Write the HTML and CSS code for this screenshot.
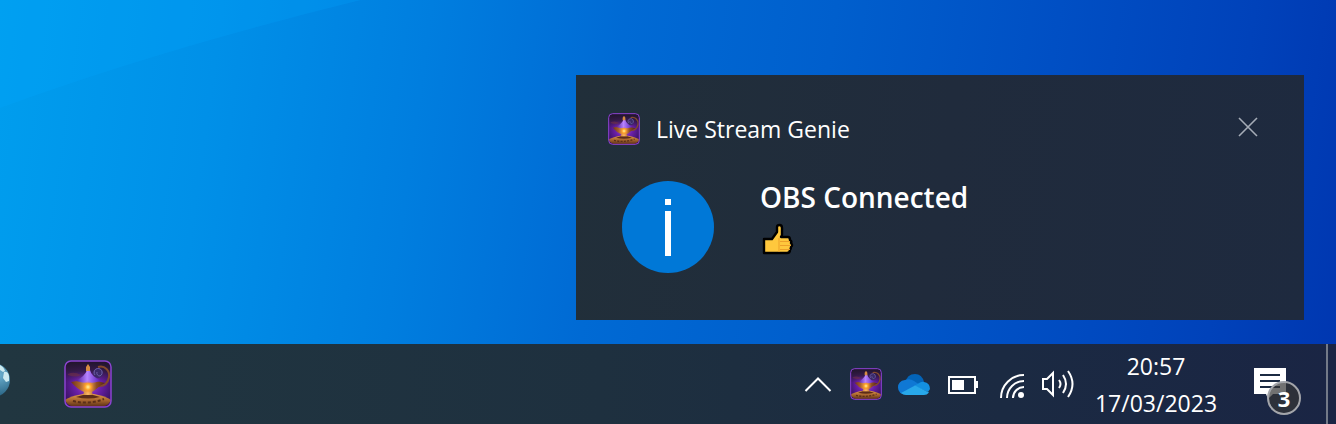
FILE: index.html
```html
<!DOCTYPE html>
<html lang="en">
<head>
<meta charset="utf-8">
<title>Desktop</title>
<link rel="stylesheet" href="styles.css">
</head>
<body class="desktop">
<svg class="sprite" aria-hidden="true">
  <defs>
    <radialGradient id="glow" cx="50%" cy="50%" r="55%">
      <stop offset="0" stop-color="#b050e0"/><stop offset=".5" stop-color="#6a1fa8"/><stop offset="1" stop-color="#3a1264"/>
    </radialGradient>
    <linearGradient id="shade" x1="0" x2="0" y1="0" y2="1">
      <stop offset="0" stop-color="#1e1428"/><stop offset=".5" stop-color="#2e1a3c" stop-opacity=".85"/><stop offset="1" stop-color="#3a1a54" stop-opacity="0"/>
    </linearGradient>
    <linearGradient id="gold" x1="0" x2="1" y1="0" y2="0">
      <stop offset="0" stop-color="#6e3216"/><stop offset=".25" stop-color="#a8602a"/><stop offset=".5" stop-color="#ffb860"/><stop offset=".75" stop-color="#8e4c22"/><stop offset="1" stop-color="#542612"/>
    </linearGradient>
    <linearGradient id="base" x1="0" x2="0" y1="0" y2="1">
      <stop offset="0" stop-color="#e09a48"/><stop offset=".45" stop-color="#a8652e"/><stop offset="1" stop-color="#4a2412"/>
    </linearGradient>
    <linearGradient id="cone" x1="0" x2="1" y1="0" y2="0">
      <stop offset="0" stop-color="#4c1696"/><stop offset=".45" stop-color="#b684ff"/><stop offset="1" stop-color="#5016b4"/>
    </linearGradient>
    <radialGradient id="flame"><stop offset="0" stop-color="#fff4a0"/><stop offset=".5" stop-color="#ffa428"/><stop offset="1" stop-color="#e07020" stop-opacity="0"/></radialGradient>
    <radialGradient id="sea" cx="68%" cy="35%" r="60%"><stop offset="0" stop-color="#6cb0d0"/><stop offset="1" stop-color="#2c6888"/></radialGradient>
    <clipPath id="tile"><rect x="1" y="1" width="46" height="46" rx="6"/></clipPath>
  </defs>
  <symbol id="lamp" viewBox="0 0 48 48">
    <g clip-path="url(#tile)">
      <rect width="48" height="48" fill="url(#glow)"/>
      <rect width="48" height="22" fill="url(#shade)"/>
      <path d="M4 14Q10 11 17 15Q12 18 4 15Z" fill="#713044" opacity=".6"/>
      <circle cx="34" cy="13" r="5" fill="#3a2a68"/>
      <path d="M31 15A4 4 0 1 1 36 16A3 3 0 0 1 33 12" fill="none" stroke="#7060a8"/>
      <path d="M34 7C41 5 46 11 45 17C44 23 41 26 35 26" fill="none" stroke="#844a2c" stroke-width="2"/>
      <path d="M1 40Q6 36 19 34H30Q42 36 47 40Q45 46 34 48H14Q3 46 1 40Z" fill="url(#base)"/>
      <path d="M19 35H29L36 37Q24 40 12 37Z" fill="#5c2c18"/>
      <path d="M9 41Q24 45 40 39" fill="none" stroke="#5a2e18" stroke-width="2" stroke-dasharray="3 2"/>
      <path d="M7 22Q16 20 24 20T41 23Q35 26 31 30L28 32 29 35H19L20 32Q13 29 7 22Z" fill="url(#gold)"/>
      <path d="M23 10H26Q27 16 37 21Q24 25 12 21Q21 16 23 10Z" fill="url(#cone)"/>
      <path d="M24 4L26 7V11H22V7Z" fill="#d78c42"/>
      <circle cx="24" cy="27" r="6" fill="url(#flame)"/>
    </g>
    <rect x="1" y="1" width="46" height="46" rx="6" fill="none" stroke="#8b43d0" stroke-width="1.5"/>
  </symbol>
</svg>

<main class="workspace">
  <svg class="beam" viewBox="0 0 365 108" preserveAspectRatio="none" aria-hidden="true">
    <path d="M0 0H365Q160 50 0 108Z" fill="#00a8ff" opacity=".22"/>
  </svg>
  <section class="toast" role="status">
    <header class="toast-header">
      <svg class="icon" aria-hidden="true"><use href="#lamp"/></svg>
      <span class="app-name">Live Stream Genie</span>
      <button class="close" aria-label="Close"><svg width="20" height="20" viewBox="0 0 20 20"><path d="M1 1L19 19M19 1L1 19" stroke="#a5acb7" stroke-width="1.6"/></svg></button>
    </header>
    <div class="toast-body">
      <svg class="info" viewBox="0 0 92 92" aria-hidden="true">
        <circle cx="46" cy="46" r="46" fill="#0078d7"/>
        <path d="M43 18h6v6h-6zM43 30h6v45h-6z" fill="#fff"/>
      </svg>
      <div class="message">
        <h1 class="title">OBS Connected</h1>
        <svg class="thumb" viewBox="0 0 32 32" role="img" aria-label="Thumbs up">
          <path d="M2 16H10L15 9V4Q15 2 17.500 2T20 5V12L19 14H26Q28 14 28 17Q30 18 29 20Q31 22 29 24Q29 26 28 27Q28 30 25 30H2Z" fill="#ffc83d" stroke="#000" stroke-width="2.400" stroke-linejoin="round"/>
          <path d="M17 15V29M18 18.500H28M18 22.500H29M18 26.500H28" fill="none" stroke="#eda12a"/>
        </svg>
      </div>
    </div>
  </section>
</main>

<footer class="taskbar">
  <div class="apps">
    <button class="globe" aria-label="Browser"><svg width="10" height="36" viewBox="0 0 10 36">
      <circle cx="-7" cy="18" r="17" fill="url(#sea)"/>
      <path d="M0 3Q4 5 5 9L3 10 0 8ZM4 10Q8 9 9 14V19L6 20 3 16Z" fill="#cdeaf0"/>
    </svg></button>
    <button class="app" aria-label="Live Stream Genie"><svg class="app-icon" aria-hidden="true"><use href="#lamp"/></svg></button>
  </div>
  <div class="tray">
    <button class="tray-item" aria-label="Show hidden icons"><svg class="icon" viewBox="0 0 32 32"><path d="M3.500 23L16 10.500 28.500 23" fill="none" stroke="#fff" stroke-width="2"/></svg></button>
    <button class="tray-item" aria-label="Live Stream Genie"><svg class="icon"><use href="#lamp"/></svg></button>
    <button class="tray-item" aria-label="OneDrive"><svg class="icon" viewBox="0 0 32 32">
      <path d="M7 15Q9 6 17 6Q24 6 26 14L23 20 14 16Z" fill="#0364b8"/>
      <path d="M7 12Q12 10 16 13L22 17 8 26.500Q0 26 0 19.500Q0 13 7 12Z" fill="#0f78d4"/>
      <path d="M16 18L22 14.500Q24 13.500 26 14Q32 15 32 21L30 24Z" fill="#1490df"/>
      <path d="M3 25L17 17.500 31 24.500Q29 27 26 27H8Q5 27 3 25Z" fill="#28a8ea"/>
    </svg></button>
    <button class="tray-item" aria-label="Battery"><svg class="icon" viewBox="0 0 32 32"><path d="M3 9H29V25H3Z" fill="none" stroke="#fff" stroke-width="2"/><path d="M6 12H18V22H6ZM30 13H32V20H30Z" fill="#fff"/></svg></button>
    <button class="tray-item" aria-label="Network"><svg class="icon" viewBox="0 0 32 32"><path d="M7 30A23 23 0 0 1 30 7M13 30A17 17 0 0 1 30 13M19 30A11 11 0 0 1 30 19" fill="none" stroke="#fff" stroke-width="2"/><circle cx="27" cy="27" r="3" fill="#fff"/></svg></button>
    <button class="tray-item" aria-label="Volume"><svg class="icon" viewBox="0 0 32 32"><path d="M1 11H5L11 5V27L5 21H1Z" fill="none" stroke="#fff" stroke-width="2"/><path d="M17 12Q20 16 17 20M21 7Q27 16 21 25M26 3Q35 16 26 29" fill="none" stroke="#fff" stroke-width="2"/></svg></button>
    <button class="clock"><time>20:57</time><time>17/03/2023</time></button>
    <button class="actions" aria-label="Action center, 3 notifications">
      <svg class="note" viewBox="0 0 32 32" aria-hidden="true"><path d="M0 0H32V26H19L14 31 12 26H0Z" fill="#fff"/><path d="M6 7H26M6 13H26M6 19H26" stroke="#1b2a42" stroke-width="2"/></svg>
      <span class="count">3</span>
    </button>
    <button class="peek" aria-label="Show desktop"></button>
  </div>
</footer>
</body>
</html>
```
FILE: styles.css
```css
* { box-sizing: border-box; }

.desktop {
  margin: 0;
  min-height: 100vh;
  display: flex;
  flex-direction: column;
  overflow: hidden;
  color: #fff;
  font-family: "Segoe UI", "Open Sans", "Noto Sans", sans-serif;
  font-size: 23px;
  background: linear-gradient(98deg, #009eee 0%, #0090e8 16%, #007edf 31%, #006ad4 45%, #005fcd 60%, #004fc4 76%, #0042ba 90%, #0036b0 100%);
}

.sprite { position: absolute; width: 0; height: 0; }

button {
  border: 0;
  padding: 0;
  background: none;
  color: inherit;
  font: inherit;
  cursor: pointer;
}

svg { display: block; }

.icon { width: 32px; height: 32px; flex: none; }

.workspace {
  position: relative;
  flex: 1;
  display: flex;
  justify-content: flex-end;
  align-items: flex-end;
  padding: 24px 32px;
}

.beam { position: absolute; left: 0; top: 0; width: 27%; height: 108px; }

.toast {
  position: relative;
  width: 728px;
  max-width: 100%;
  padding: 36px 46px 47px 32px;
  background: linear-gradient(98deg, #212f3a, #202b3c 50%, #1e2a3f);
}

.toast-header { display: flex; align-items: center; gap: 16px; line-height: 36px; }

.app-name { flex: 1; }

.close { display: grid; place-items: center; align-self: flex-start; height: 32px; }

.toast-body { display: flex; gap: 46px; padding: 34px 0 0 14px; }

.info { width: 92px; height: 92px; flex: none; }

.title { margin: 0; font-size: 28px; line-height: 32px; font-weight: 600; }

.thumb { width: 32px; height: 32px; margin: 10px 0 0 2px; }

.taskbar {
  display: flex;
  justify-content: space-between;
  height: 80px;
  background: linear-gradient(90deg, #213640, #1e303f 45%, #1b2a42 75%, #1a2544);
}

.apps { display: flex; align-items: center; gap: 54px; }

.globe { padding-bottom: 8px; }

.app-icon { width: 48px; height: 48px; }

.tray { display: flex; align-items: center; gap: 16px; }

.clock {
  width: 132px;
  display: flex;
  flex-direction: column;
  align-items: center;
  padding-top: 2px;
  line-height: 37px;
  white-space: nowrap;
}

.actions {
  position: relative;
  display: flex;
  align-items: flex-start;
  width: 48px;
  height: 48px;
  margin: 0 8px 0 16px;
  padding-top: 4px;
}

.note { width: 32px; height: 32px; margin-top: 4px; }

.count {
  position: absolute;
  right: 1px;
  bottom: -7px;
  width: 34px;
  height: 34px;
  border: 2px solid #a3a5aa;
  border-radius: 50%;
  background: rgba(54, 54, 54, .7);
  font-size: 22px;
  line-height: 30px;
  font-weight: 700;
}

.peek { align-self: stretch; width: 10px; border-left: 2px solid #737a88; }
```
